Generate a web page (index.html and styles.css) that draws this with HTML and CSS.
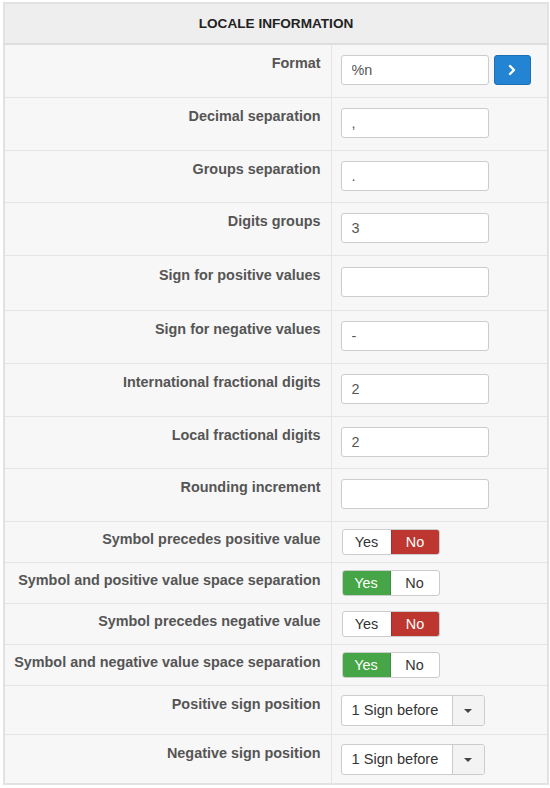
FILE: index.html
```html
<!DOCTYPE html>
<html>
<head>
	<meta charset="utf-8">
	<title>Locale information</title>
	<link rel="stylesheet" href="styles.css">
</head>
<body>
<table class="locale">
<colgroup><col class="keyCol"><col class="valCol"></colgroup>
<thead>
<tr><th colspan="2">LOCALE INFORMATION</th></tr>
</thead>
<tbody>
<tr class="field">
	<td class="key"><label>Format</label></td>
	<td class="val"><input type="text" value="%n" class="short"><button class="go"><svg width="12" height="12" viewBox="0 0 12 12"><path d="M4 2l4 4-4 4" fill="none" stroke="#fff" stroke-width="2.4" stroke-linecap="round" stroke-linejoin="round"/></svg></button></td>
</tr>
<tr class="field">
	<td class="key"><label>Decimal separation</label></td>
	<td class="val"><input type="text" value=","></td>
</tr>
<tr class="field short">
	<td class="key"><label>Groups separation</label></td>
	<td class="val"><input type="text" value="."></td>
</tr>
<tr class="field">
	<td class="key"><label>Digits groups</label></td>
	<td class="val"><input type="text" value="3"></td>
</tr>
<tr class="field tall">
	<td class="key"><label>Sign for positive values</label></td>
	<td class="val"><input type="text" value=""></td>
</tr>
<tr class="field">
	<td class="key"><label>Sign for negative values</label></td>
	<td class="val"><input type="text" value="-"></td>
</tr>
<tr class="field">
	<td class="key"><label>International fractional digits</label></td>
	<td class="val"><input type="text" value="2"></td>
</tr>
<tr class="field short">
	<td class="key"><label>Local fractional digits</label></td>
	<td class="val"><input type="text" value="2"></td>
</tr>
<tr class="field">
	<td class="key"><label>Rounding increment</label></td>
	<td class="val"><input type="text" value=""></td>
</tr>
<tr class="switch">
	<td class="key"><label>Symbol precedes positive value</label></td>
	<td class="val"><span class="toggle"><span>Yes</span><span class="no on">No</span></span></td>
</tr>
<tr class="switch">
	<td class="key"><label>Symbol and positive value space separation</label></td>
	<td class="val"><span class="toggle"><span class="yes on">Yes</span><span>No</span></span></td>
</tr>
<tr class="switch">
	<td class="key"><label>Symbol precedes negative value</label></td>
	<td class="val"><span class="toggle"><span>Yes</span><span class="no on">No</span></span></td>
</tr>
<tr class="switch">
	<td class="key"><label>Symbol and negative value space separation</label></td>
	<td class="val"><span class="toggle"><span class="yes on">Yes</span><span>No</span></span></td>
</tr>
<tr class="pick">
	<td class="key"><label>Positive sign position</label></td>
	<td class="val"><span class="dropdown"><span class="choice">1 Sign before</span><span class="caret"></span></span></td>
</tr>
<tr class="pick">
	<td class="key"><label>Negative sign position</label></td>
	<td class="val"><span class="dropdown"><span class="choice">1 Sign before</span><span class="caret"></span></span></td>
</tr>
</tbody>
</table>
</body>
</html>
```

FILE: styles.css
```css
body {
	margin: 0;
	padding: 2px 3px;
	background: #fff;
	font-family: "Liberation Sans", Arial, sans-serif;
	font-size: 14px;
	color: #555;
}

table.locale {
	width: 544px;
	border-collapse: collapse;
	border: 2px solid #e2e2e2;
	table-layout: fixed;
}

col.keyCol {
	width: 327px;
}

col.valCol {
	width: 217px;
}

table.locale th {
	height: 39px;
	padding: 0;
	background: #eee;
	color: #222;
	font-size: 13.6px;
	font-weight: bold;
	text-align: center;
	border-bottom: 2px solid #ddd;
}

td {
	background: #f7f7f7;
	border-top: 1px solid #e4e4e4;
	vertical-align: top;
}

td.key {
	padding-right: 10px;
	text-align: right;
	white-space: nowrap;
	border-right: 1px solid #e4e4e4;
}

td.key label {
	display: block;
	font-size: 14.4px;
	font-weight: bold;
	line-height: 17px;
	color: #555;
}

td.val {
	padding-left: 9px;
}

tr.field td {
	height: 30px;
	padding-top: 10px;
	padding-bottom: 12px;
}

tr.short td {
	padding-bottom: 11px;
}

tr.tall td {
	padding-top: 11px;
	padding-bottom: 13px;
}

tr.switch td {
	height: 26px;
	padding-top: 7px;
	padding-bottom: 7px;
}

tr.switch td.key label {
	padding-top: 2px;
}

tr.pick td {
	height: 31px;
	padding-top: 9px;
	padding-bottom: 8px;
}

tr.pick td.key label {
	padding-top: 1px;
}

input[type=text] {
	box-sizing: border-box;
	width: 148px;
	height: 30px;
	margin: 0;
	padding: 4px 10px;
	border: 1px solid #ccc;
	border-radius: 3px;
	background: #fff;
	font: 14.4px "Liberation Sans", Arial, sans-serif;
	color: #555;
	vertical-align: top;
}

button.go {
	width: 37px;
	height: 30px;
	margin-left: 5px;
	padding: 0;
	border: 1px solid #1b6fb5;
	border-radius: 3px;
	background: #2384d3;
	vertical-align: top;
	display: inline-flex;
	align-items: center;
	justify-content: center;
}

.toggle {
	display: inline-flex;
	margin-left: 1px;
	border: 1px solid #ccc;
	border-radius: 3px;
	background: #fff;
	overflow: hidden;
}

.toggle span {
	box-sizing: border-box;
	width: 48px;
	height: 24px;
	line-height: 24px;
	text-align: center;
	font-size: 14.4px;
	color: #333;
}

.toggle span.on {
	color: #fff;
}

.toggle span.no.on {
	background: #bd362f;
	border-left: 1px solid #a0302a;
}

.toggle span.yes.on {
	background: #46a546;
	border-right: 1px solid #3b8e3b;
}

.dropdown {
	display: inline-flex;
	box-sizing: border-box;
	width: 144px;
	height: 31px;
	border: 1px solid #ccc;
	border-radius: 3px;
	background: #fff;
	overflow: hidden;
}

.dropdown .choice {
	flex: 1;
	padding-left: 10px;
	line-height: 29px;
	font-size: 14.6px;
	color: #333;
}

.dropdown .caret {
	width: 31px;
	border-left: 1px solid #ccc;
	background: #f3f3f3;
	display: flex;
	align-items: center;
	justify-content: center;
}

.dropdown .caret::before {
	content: "";
	border-top: 4px solid #444;
	border-left: 4px solid transparent;
	border-right: 4px solid transparent;
}
```
